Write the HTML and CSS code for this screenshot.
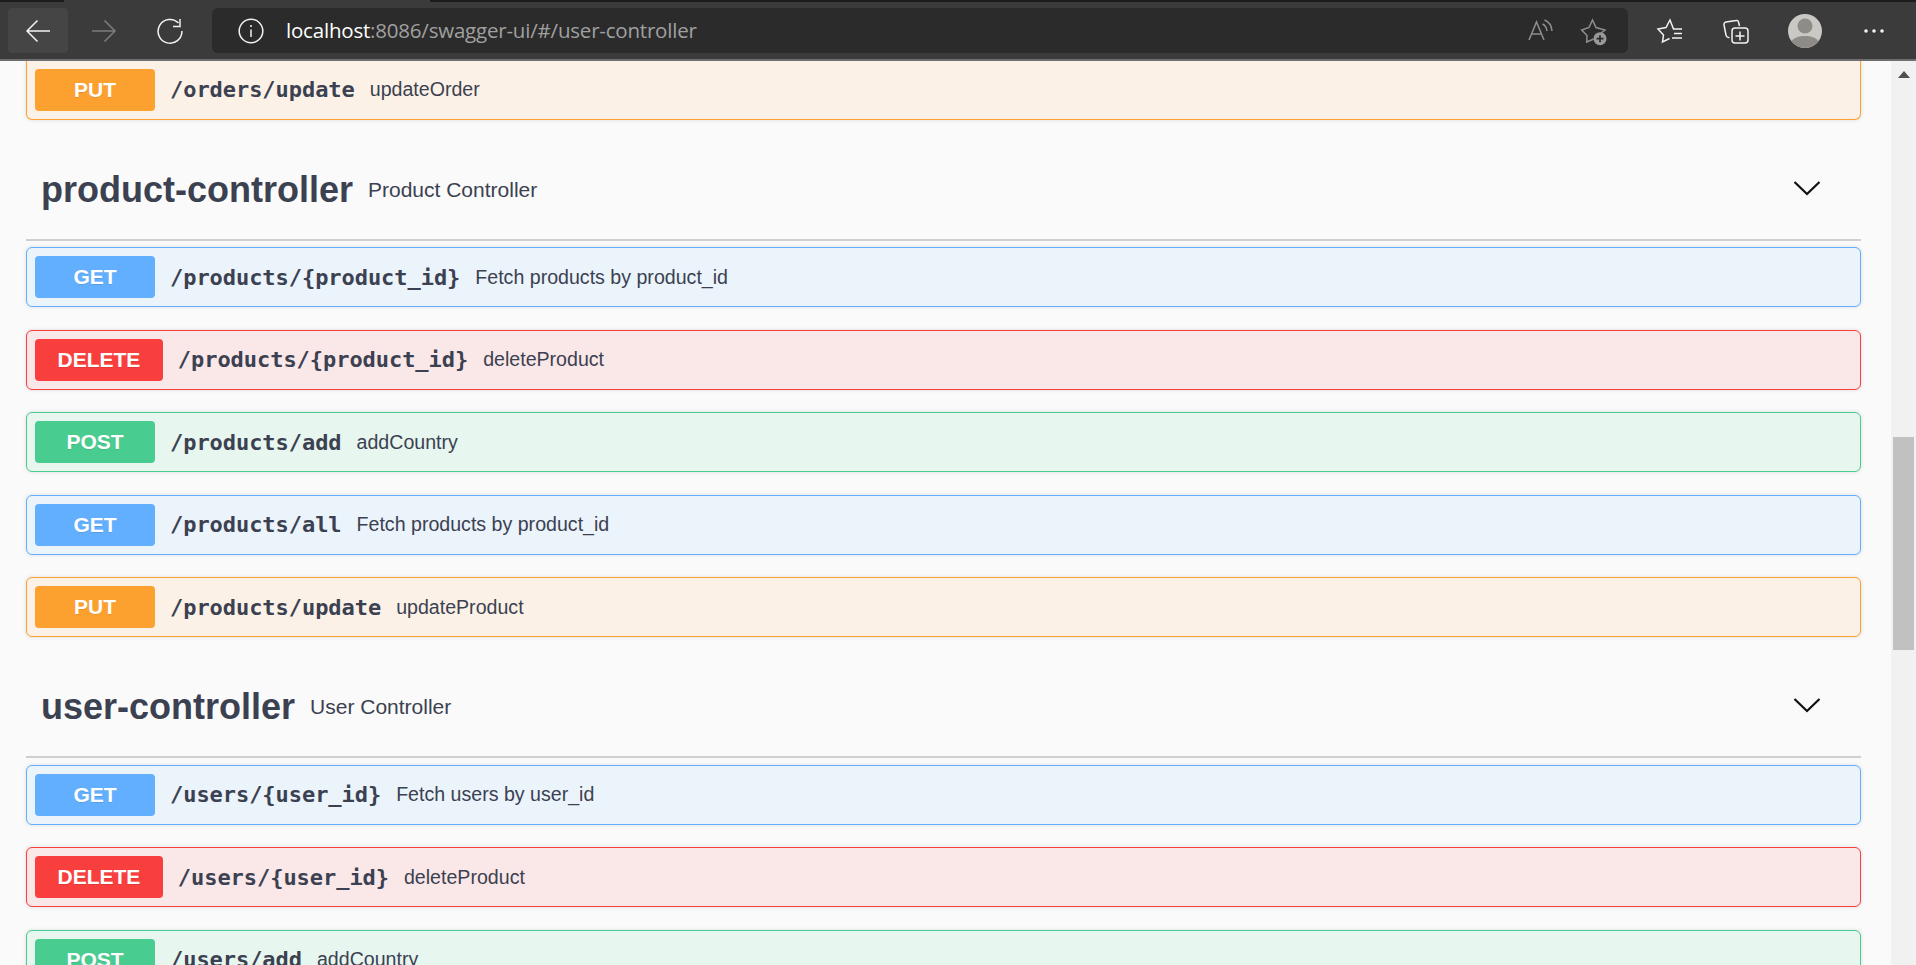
FILE: index.html
```html
<!DOCTYPE html>
<html lang="en">
<head>
<meta charset="utf-8">
<title>Swagger UI</title>
<link rel="stylesheet" href="styles.css">
</head>
<body>
<div class="tabstrip"><div class="tab"></div></div>
<header class="toolbar">
  <div class="nav">
    <button class="navbtn hover" aria-label="Back"><svg width="28" height="28" viewBox="0 0 28 28" fill="none" stroke="#f2f2f2" stroke-width="1.5"><path d="M26 14H3M13.500 3.500 3 14l10.500 10.500"/></svg></button>
    <button class="navbtn" aria-label="Forward"><svg width="28" height="28" viewBox="0 0 28 28" fill="none" stroke="#7d7d7d" stroke-width="1.5"><path d="M2 14h23M14.500 3.500 25 14 14.500 24.500"/></svg></button>
    <button class="navbtn" aria-label="Reload"><svg width="28" height="28" viewBox="0 0 28 28" fill="none" stroke="#f2f2f2" stroke-width="1.5"><path d="M22.500 6A11.900 11.900 0 1 0 25.900 14"/><path d="M24 2v7.500h-7"/></svg></button>
  </div>
  <div class="address">
    <svg class="info" width="26" height="26" viewBox="0 0 26 26" fill="none" stroke="#f2f2f2" stroke-width="1.5"><circle cx="13" cy="13" r="11.800"/><path d="M13 11.500v7.500M13 7v2"/></svg>
    <span class="url"><span class="host">localhost</span>:8086/swagger-ui/#/user-controller</span>
    <span class="addr-icons">
      <svg width="28" height="28" viewBox="0 0 28 28" fill="none" stroke="#8f8f8f" stroke-width="1.500"><path d="M2 23 9.500 5 17 23M4.500 17h10"/><path d="M15.500 7c2.500 1 4 3.500 4.500 7M17.500 3c4 1.500 7 5.500 7.500 11"/></svg>
      <svg width="30" height="30" viewBox="0 0 30 30" fill="none" stroke="#8f8f8f" stroke-width="1.500"><path d="M21 17l4-3-9-2.500L12.500 4 9 11.500 1.700 14 7 19.500 6.700 26l7-3"/><circle cx="20" cy="22.700" r="6.500" fill="#999" stroke="none"/><path d="M16.500 22.700h7M20 19.200v7" stroke="#2b2b2b" stroke-width="1.700"/></svg>
    </span>
  </div>
  <div class="tools">
    <svg width="28" height="28" viewBox="0 0 28 28" fill="none" stroke="#f2f2f2" stroke-width="1.500"><path d="M26 12h-8.500L14 3l-4 7.500L2 12l5.500 6-1 7 7-3.500"/><path d="M18 16.500h8M16 21h10"/></svg>
    <svg width="28" height="28" viewBox="0 0 28 28" fill="none" stroke="#f2f2f2" stroke-width="1.500"><rect x="10" y="11" width="16" height="15" rx="3"/><path d="M18 14.500v9M13.500 19h9"/><path d="M17.500 9 16.500 5a2 2 0 0 0-2.500-1.500L4 5a2.500 2.500 0 0 0-2 3l2 10a3 3 0 0 0 3.500 2.500"/></svg>
    <span class="avatar"><svg width="34" height="34" viewBox="0 0 34 34"><circle cx="17" cy="17" r="17" fill="#c9c8c4"/><circle cx="17" cy="12" r="7.500" fill="#8f8c87"/><path d="M3.500 27.300C6 23.500 11 22 17 22s11 1.500 13.500 5.300a17 17 0 0 1-27 0z" fill="#8f8c87"/></svg></span>
    <svg class="dots" width="22" height="6" viewBox="0 0 22 6" fill="#f2f2f2"><circle cx="3" cy="3" r="1.800"/><circle cx="11" cy="3" r="1.800"/><circle cx="19" cy="3" r="1.800"/></svg>
  </div>
</header>
<div class="page">
  <main class="content">
    <div class="op put"><span class="method">PUT</span><span class="path">/orders/update</span><span class="desc">updateOrder</span></div>

    <section class="tag">
      <div class="tag-head">
        <h3 class="tag-name">product-controller</h3><span class="tag-desc">Product Controller</span>
        <svg class="chev" width="28" height="16" viewBox="0 0 28 16" fill="none" stroke="#111" stroke-width="2.200"><path d="M1.500 2 14 14 26.500 2"/></svg>
      </div>
      <div class="op get"><span class="method">GET</span><span class="path">/products/{product_id}</span><span class="desc">Fetch products by product_id</span></div>
      <div class="op del"><span class="method">DELETE</span><span class="path">/products/{product_id}</span><span class="desc">deleteProduct</span></div>
      <div class="op post"><span class="method">POST</span><span class="path">/products/add</span><span class="desc">addCountry</span></div>
      <div class="op get"><span class="method">GET</span><span class="path">/products/all</span><span class="desc">Fetch products by product_id</span></div>
      <div class="op put"><span class="method">PUT</span><span class="path">/products/update</span><span class="desc">updateProduct</span></div>
    </section>

    <section class="tag">
      <div class="tag-head">
        <h3 class="tag-name">user-controller</h3><span class="tag-desc">User Controller</span>
        <svg class="chev" width="28" height="16" viewBox="0 0 28 16" fill="none" stroke="#111" stroke-width="2.200"><path d="M1.500 2 14 14 26.500 2"/></svg>
      </div>
      <div class="op get"><span class="method">GET</span><span class="path">/users/{user_id}</span><span class="desc">Fetch users by user_id</span></div>
      <div class="op del"><span class="method">DELETE</span><span class="path">/users/{user_id}</span><span class="desc">deleteProduct</span></div>
      <div class="op post"><span class="method">POST</span><span class="path">/users/add</span><span class="desc">addCountry</span></div>
    </section>
  </main>
  <aside class="scrollbar">
    <svg class="arrow" width="12" height="7" viewBox="0 0 12 7" fill="#505050"><path d="M6 0l6 7H0z"/></svg>
    <div class="thumb"></div>
  </aside>
</div>
</body>
</html>
```
FILE: styles.css
```css
* { box-sizing: border-box; }
html, body { margin: 0; height: 965px; overflow: hidden; background: #fafafa; }
body { font-family: "Liberation Sans", Arial, sans-serif; color: #3b4151; }

.tabstrip { height: 2px; background: #1c1c1c; }
.tab { width: 366px; height: 2px; margin-left: 64px; background: #3b3b3b; }

.toolbar { height: 59px; padding: 6px 0 6px 8px; display: flex; align-items: stretch; background: #3b3b3b; border-bottom: 2px solid #6e6e6e; }
.nav { display: flex; gap: 6px; width: 204px; }
.navbtn { width: 60px; padding: 0; border: 0; border-radius: 4px; background: transparent; display: flex; align-items: center; justify-content: center; }
.navbtn.hover { background: #454545; }
.address { width: 1416px; display: flex; align-items: center; background: #2b2b2b; border-radius: 6px; padding-left: 26px; padding-right: 18px; }
.info { flex: none; }
.url { margin: -2px 0 0 22px; font: 20.500px "Open Sans", sans-serif; color: #a0a0a0; white-space: nowrap; letter-spacing: -.2px; }
.host { color: #fff; }
.addr-icons { margin-left: auto; display: flex; align-items: center; gap: 25px; }
.tools { flex: 1; display: flex; align-items: center; padding-left: 28px; gap: 38px; }
.avatar { display: flex; }
.dots { margin-left: 3px; }

.page { display: flex; height: 904px; }
.content { flex: 1; min-width: 0; padding: 0 30px 0 26px; overflow: hidden; }
.scrollbar { width: 25px; flex: none; background: #f1f1f1; display: flex; flex-direction: column; align-items: center; }
.arrow { margin-top: 10px; flex: none; }
.thumb { width: 21px; height: 213px; margin-top: 359px; background: #c1c1c1; }

.op { height: 60px; margin-bottom: 22.500px; display: flex; align-items: center; padding: 0 8px; border: 1px solid; border-radius: 6px; box-shadow: 0 0 4px rgba(0,0,0,.12); }
.content > .op { margin-bottom: 0; height: 58.500px; padding-top: 0; border-top: 0; border-radius: 0 0 6px 6px; }
.tag .op:last-child { margin-bottom: 0; }
.method { min-width: 120px; height: 42px; padding: 0 22.500px; border-radius: 4px; display: flex; align-items: center; justify-content: center; color: #fff; font-size: 21px; font-weight: 700; text-shadow: 0 1px 0 rgba(0,0,0,.1); flex: none; }
.path { margin-left: 15px; font: 700 22px "DejaVu Sans Mono", monospace; letter-spacing: -.05px; color: #3b4151; }
.desc { margin-left: 15px; font-size: 19.600px; color: #3b4151; }

.get { background: #ebf3fb; border-color: #61affe; }
.get .method { background: #61affe; }
.del { background: #fae7e7; border-color: #f93e3e; }
.del .method { background: #f93e3e; }
.post { background: #e7f6ef; border-color: #49cc90; }
.post .method { background: #49cc90; }
.put { background: #fcf1e6; border-color: #fca130; }
.put .method { background: #fca130; }

.tag-head { height: 121px; padding: 21px 16px 0 15px; display: flex; align-items: center; border-bottom: 2px solid #cfcfd1; margin-bottom: 6.500px; }
.tag-name { margin: 0; font-size: 36px; font-weight: 700; color: #3b4151; }
.tag-desc { margin-left: 15px; font-size: 21px; }
.chev { margin-left: auto; margin-right: 24px; margin-top: -4px; }
```
